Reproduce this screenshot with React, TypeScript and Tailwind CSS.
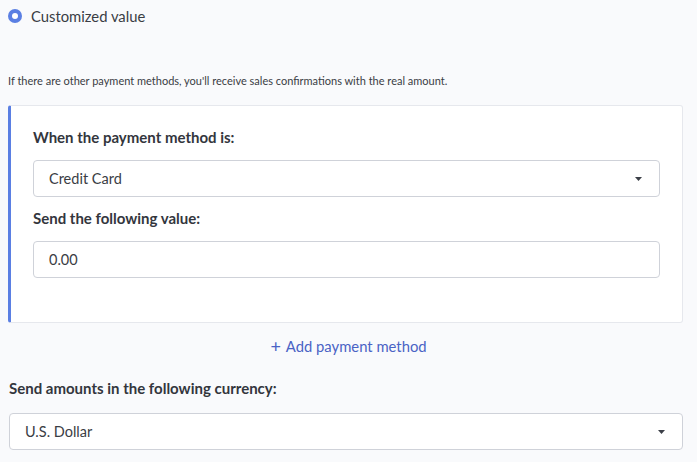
import React from 'react';

function Caret() {
  return (
    <svg width="7" height="4" viewBox="0 0 7 4" className="shrink-0">
      <path d="M0 0 L7 0 L3.5 4 Z" fill="#3b3f47" />
    </svg>
  );
}

function SelectBox({ value }: { value: string }) {
  return (
    <div className="flex h-[37px] items-center justify-between rounded-[4px] border border-[#cfd2d9] bg-white pl-[15px] pr-[17px] text-[14.5px] text-[#3a3d44]">
      <span>{value}</span>
      <Caret />
    </div>
  );
}

export default function App() {
  return (
    <div
      className="min-h-[462px] w-[697px] bg-[#f9fafc] text-[#33363d]"
      style={{ fontFamily: 'Lato, "Open Sans", sans-serif' }}
    >
      {/* Radio */}
      <div className="flex items-center gap-[9px] pl-[8px] pt-[8px]">
        <div className="flex h-[14px] w-[14px] items-center justify-center rounded-full bg-[#5a7fe3]">
          <div className="h-[6px] w-[6px] rounded-full bg-white" />
        </div>
        <span className="text-[14.8px] leading-[16px] text-[#3a3d44]">Customized value</span>
      </div>

      <p className="pl-[8px] pt-[50px] text-[11px] leading-[13px] text-[#3a3d44]">
        If there are other payment methods, you'll receive sales confirmations with the real amount.
      </p>

      {/* Payment method card */}
      <div className="ml-[8px] mr-[14px] mt-[18px] rounded-[3px] border border-l-[3px] border-[#e6e8ed] border-l-[#5a7fe3] bg-white pb-[44px] pl-[22px] pr-[22px] pt-[22px]">
        <div className="text-[15px] font-bold leading-[18px] text-[#33363d]">When the payment method is:</div>
        <div className="mt-[14px]">
          <SelectBox value="Credit Card" />
        </div>
        <div className="mt-[12px] text-[15px] font-bold leading-[18px] text-[#33363d]">Send the following value:</div>
        <div className="mt-[14px] flex h-[37px] items-center rounded-[4px] border border-[#cfd2d9] bg-white pl-[15px] text-[14.5px] text-[#3a3d44]">
          0.00
        </div>
      </div>

      <div className="flex justify-center pt-[14px]">
        <button className="flex items-center gap-[5px] text-[14.8px] leading-[18px] text-[#4a63c5]">
          <span className="text-[18px] leading-[18px]">+</span>
          Add payment method
        </button>
      </div>

      <div className="pl-[9px] pt-[24px] text-[15px] font-bold leading-[18px] text-[#33363d]">
        Send amounts in the following currency:
      </div>
      <div className="ml-[9px] mr-[14px] mt-[16px]">
        <SelectBox value="U.S. Dollar" />
      </div>
    </div>
  );
}
